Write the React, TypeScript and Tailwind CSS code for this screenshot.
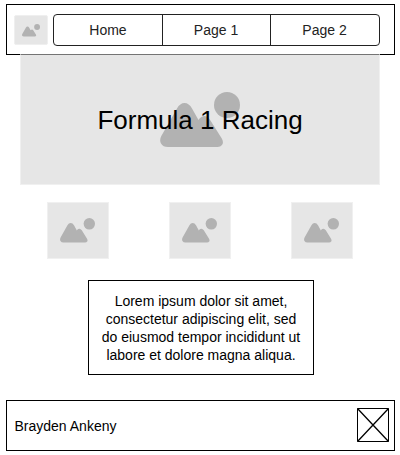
function PictureIcon({ className }: { className: string }) {
  return (
    <svg viewBox="0 0 80 55" preserveAspectRatio="none" className={className} fill="#b2b2b2">
      <circle cx="67" cy="13" r="13" />
      <path d="M1.3 44 L17 16.500 Q20 11 24.500 11 Q29 11 32 16.500 L38.500 28 L39.500 26.500 Q41.500 24 44.300 24 Q47.500 24 49.800 27.500 L61.800 46.500 Q64 50.500 62 53 Q60.500 55 57.500 55 H8 Q3 55 1 51.500 Q-.8 48 1.300 44 Z" />
    </svg>
  );
}

function Thumbnail() {
  return (
    <div className="flex h-[57px] w-[62px] border border-[#f0f0f0] bg-[#e6e6e6] pt-[15px] pl-3">
      <PictureIcon className="h-[24.500px] w-[35px]" />
    </div>
  );
}

export default function App() {
  return (
    <div className='h-[455px] w-[400px] overflow-hidden bg-white pt-1 font-["Liberation_Sans",Arial,sans-serif] text-sm text-black'>
      <header className="ml-1.5 flex h-[51px] w-[389px] border border-black pt-[9px] pl-[7px]">
        <div className="mt-px flex h-[30px] w-[34px] rounded-[2px] border border-[#efefef] bg-[#e6e6e6] pt-2 pl-[7px]">
          <PictureIcon className="h-[12.500px] w-[18px]" />
        </div>
        <nav className="ml-[5px] flex h-8 w-[327px] rounded-[4px] border border-[#222] text-center leading-[31px] text-[#222]">
          <a className="w-[108px]">Home</a>
          <a className="w-[108px] border-l border-[#222] pr-px">Page 1</a>
          <a className="w-[109px] border-l border-[#222] pr-px">Page 2</a>
        </nav>
      </header>

      <section className="-mt-px ml-5 grid h-[131px] w-[360px] border border-[#f0f0f0] border-t-[#747474] bg-[#e6e6e6]">
        <PictureIcon className="col-start-1 row-start-1 mt-[37px] ml-[139px] h-[55px] w-20" />
        <h1 className="z-10 col-start-1 row-start-1 mt-[50px] text-center text-[26px] leading-[30px]">Formula 1 Racing</h1>
      </section>

      <section className="mt-[17px] ml-[47px] flex gap-[60px]">
        <Thumbnail />
        <Thumbnail />
        <Thumbnail />
      </section>

      <p className="mt-[21px] ml-[88px] h-[95px] w-[226px] border border-black pt-[11px] text-center leading-[18px]">
        Lorem ipsum dolor sit amet,
        <br />
        consectetur adipiscing elit, sed
        <br />
        do eiusmod tempor incididunt ut
        <br />
        labore et dolore magna aliqua.
      </p>

      <footer className="mt-[25px] ml-1.5 flex h-[51px] w-[389px] items-center justify-between border border-black pr-[5px] pl-[7.500px]">
        <span>Brayden Ankeny</span>
        <svg viewBox="0 0 32 34" className="-mt-px h-[34px] w-8" fill="none" stroke="#000">
          <path d="M.5.5H31.500V33.500H.5Z" />
          <path strokeWidth="1.300" d="M.5.5L31.500 33.500 M31.500.5L.5 33.500" />
        </svg>
      </footer>
    </div>
  );
}
